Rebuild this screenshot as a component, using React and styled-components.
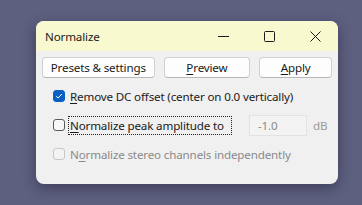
import React from 'react';
import styled, {createGlobalStyle} from 'styled-components';

const Global = createGlobalStyle`
  html, body {
    margin: 0;
    padding: 0;
    background: #5e6080;
  }
  body {
    width: 362px;
    height: 205px;
    overflow: hidden;
    font-family: "Noto Sans", "Open Sans", sans-serif;
    font-size: 11.6px;
    letter-spacing: -0.15px;
    color: #1a1a1a;
  }
`;

const Desk = styled.div`
  padding: 21px 0 0 36px;
`;

const Window = styled.div`
  width: 302px;
  height: 163px;
  background: #f0f0f0;
  border-radius: 8px;
  overflow: hidden;
  box-shadow: 0 4px 14px rgba(20, 20, 40, 0.45);
`;

const TitleBar = styled.div`
  height: 30px;
  background: #f9f9d0;
  display: flex;
  align-items: center;
  padding-left: 9px;
`;

const Title = styled.div`
  flex: 1;
  color: #1a1a1a;
`;

const Caption = styled.div`
  width: 46px;
  height: 30px;
  display: flex;
  align-items: center;
  justify-content: center;
`;

const Body = styled.div`
  padding: 6px 6px 0 6px;
`;

const ButtonRow = styled.div`
  display: flex;
  gap: 9px;
`;

const Button = styled.div`
  width: ${p => p.$w}px;
  height: 21px;
  box-sizing: border-box;
  border: 1px solid #d0d0d0;
  border-bottom-color: #b8b8b8;
  border-radius: 4px;
  background: #fdfdfd;
  display: flex;
  align-items: center;
  justify-content: center;
`;

const Options = styled.div`
  padding: 8px 0 0 11px;
  display: flex;
  flex-direction: column;
  gap: 9px;
`;

const Row = styled.div`
  height: 20px;
  display: flex;
  align-items: center;
  color: ${p => (p.$disabled ? '#8a8a8a' : '#1a1a1a')};
`;

const Box = styled.div`
  width: 12px;
  height: 12px;
  box-sizing: border-box;
  border-radius: 3px;
  border: 1px solid ${p => (p.$checked ? '#0a5fc4' : p.$disabled ? '#c8c8c8' : '#5a5a5a')};
  background: ${p => (p.$checked ? '#0a5fc4' : p.$disabled ? '#f3f3f3' : '#f7f7f7')};
  display: flex;
  align-items: center;
  justify-content: center;
  margin-right: 3px;
  flex-shrink: 0;
`;

const Label = styled.span`
  padding: 1px 1px;
  border: 1px dotted ${p => (p.$focus ? '#222' : 'transparent')};
  width: ${p => (p.$w ? `${p.$w}px` : 'auto')};
  box-sizing: border-box;
  white-space: nowrap;
`;

const U = styled.span`
  text-decoration: underline;
  text-underline-offset: 2px;
`;

const Field = styled.div`
  margin-left: 17px;
  width: 58px;
  height: 21px;
  box-sizing: border-box;
  border: 1px solid #e2e2e2;
  background: #f3f3f3;
  color: #8a8a8a;
  display: flex;
  align-items: center;
  padding-left: 8px;
`;

const Unit = styled.span`
  margin-left: 6px;
  color: #9a9a9a;
`;

const Check = () => (
  <svg width="8" height="8" viewBox="0 0 8 8">
    <path d="M1.2 4.2 L3.1 6 L6.8 2" fill="none" stroke="#fff" strokeWidth="1" />
  </svg>
);

export default function App() {
  return (
    <>
      <Global />
      <Desk>
        <Window>
          <TitleBar>
            <Title>Normalize</Title>
            <Caption>
              <svg width="11" height="11" viewBox="0 0 11 11">
                <path d="M0 5.5 H11" stroke="#1a1a1a" strokeWidth="1" />
              </svg>
            </Caption>
            <Caption>
              <svg width="11" height="11" viewBox="0 0 11 11">
                <rect x="0.5" y="0.5" width="10" height="10" rx="1" fill="none" stroke="#1a1a1a" />
              </svg>
            </Caption>
            <Caption>
              <svg width="11" height="11" viewBox="0 0 11 11">
                <path d="M0.5 0.5 L10.5 10.5 M10.5 0.5 L0.5 10.5" stroke="#1a1a1a" strokeWidth="1" />
              </svg>
            </Caption>
          </TitleBar>
          <Body>
            <ButtonRow>
              <Button $w={113}>Presets &amp; settings</Button>
              <Button $w={87}><U>P</U>review</Button>
              <Button $w={73}><U>A</U>pply</Button>
            </ButtonRow>
            <Options>
              <Row>
                <Box $checked><Check /></Box>
                <Label><U>R</U>emove DC offset (center on 0.0 vertically)</Label>
              </Row>
              <Row>
                <Box />
                <Label $focus $w={164}><U>N</U>ormalize peak amplitude to</Label>
                <Field>-1.0</Field>
                <Unit>dB</Unit>
              </Row>
              <Row $disabled>
                <Box $disabled />
                <Label>N<U>o</U>rmalize stereo channels independently</Label>
              </Row>
            </Options>
          </Body>
        </Window>
      </Desk>
    </>
  );
}
